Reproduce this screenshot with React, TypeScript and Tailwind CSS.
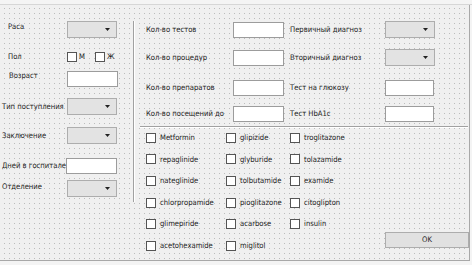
import React from 'react'

const dots =
  "bg-[radial-gradient(circle,#bcbcbc_0.6px,transparent_0.8px)] bg-[length:5px_5px] bg-[position:2px_1px]"

function Combo() {
  return (
    <div className="w-[50px] h-[17px] bg-[#e3e3e3] border border-[#adadad] flex items-center justify-end pr-[6px] shrink-0">
      <svg width="5" height="3" viewBox="0 0 5 3">
        <path d="M0 0h5L2.5 3z" fill="#222" />
      </svg>
    </div>
  )
}

function Field({ w = 51 }: { w?: number }) {
  return (
    <div
      className={
        'h-[16px] bg-white border border-[#9c9c9c] shrink-0 ' + (w === 51 ? 'w-[51px]' : 'w-[49px]')
      }
    />
  )
}

function Box() {
  return <div className="w-[10px] h-[10px] bg-white border border-[#555] shrink-0" />
}

function Check({ label }: { label: string }) {
  return (
    <div className="flex items-center gap-[4px] h-[21.6px] whitespace-nowrap">
      <Box />
      <span>{label}</span>
    </div>
  )
}

const drugs = [
  ['Metformin', 'glipizide', 'troglitazone'],
  ['repaglinide', 'glyburide', 'tolazamide'],
  ['nateglinide', 'tolbutamide', 'examide'],
  ['chlorpropamide', 'pioglitazone', 'citoglipton'],
  ['glimepiride', 'acarbose', 'insulin'],
  ['acetohexamide', 'miglitol', ''],
]

export default function App() {
  return (
    <div className="w-[472px] h-[265px] bg-[#f4f4f4] font-['DejaVu_Sans_Condensed','Liberation_Sans',sans-serif] text-[7.6px] leading-none text-[#222] overflow-hidden">
      <div className="h-[5px] border-b border-[#d6d6d6]" />
      <div className={'w-[470px] h-[256px] border-r border-b border-[#a8a8a8] bg-[#f0f0f0] flex ' + dots}>
        {/* left column */}
        <div className="w-[133px] flex flex-col">
          <div className="flex items-center h-[17px] mt-[16px]">
            <span className="w-[67px] pl-[8px] -mt-[5px]">Раса</span>
            <Combo />
          </div>
          <div className="flex items-center h-[17px] mt-[10px]">
            <span className="w-[67px] pl-[8px]">Пол</span>
            <Box />
            <span className="ml-[2px] w-[16px]">М</span>
            <Box />
            <span className="ml-[2px]">Ж</span>
          </div>
          <div className="flex items-center h-[17px] mt-[5px]">
            <span className="w-[67px] pl-[9px] -mt-[6px]">Возраст</span>
            <Field />
          </div>
          <div className="flex items-center h-[17px] mt-[11px]">
            <span className="w-[67px] pl-[2px] whitespace-nowrap">Тип поступления</span>
            <Combo />
          </div>
          <div className="flex items-center h-[17px] mt-[12px]">
            <span className="w-[67px] pl-[2px]">Заключение</span>
            <Combo />
          </div>
          <div className="flex items-center h-[17px] mt-[13px]">
            <span className="w-[66px] pl-[2px] whitespace-nowrap">Дней в госпитале</span>
            <Field />
          </div>
          <div className="flex items-center h-[17px] mt-[6px]">
            <span className="w-[67px] pl-[2px] -mt-[3px]">Отделение</span>
            <Combo />
          </div>
        </div>

        {/* separator */}
        <div className="w-[2px] h-[181px] mt-[16px] border-l border-[#a0a0a0] border-r border-r-white" />

        {/* right area */}
        <div className="flex-1 flex flex-col">
          <div className="pl-[11px] flex flex-col">
            {[
              ['Кол-во тестов', 'Первичный диагноз', 'combo', 16],
              ['Кол-во процедур', 'Вторичный диагноз', 'combo', 12],
              ['Кол-во препаратов', 'Тест на глюкозу', 'field', 13],
              ['Кол-во посещений до', 'Тест HbA1c', 'field', 9],
            ].map(([a, b, kind, mt]) => (
              <div
                key={a as string}
                className={
                  'flex items-center h-[17px] ' +
                  (mt === 16 ? 'mt-[16px]' : mt === 12 ? 'mt-[11px]' : mt === 13 ? 'mt-[13px]' : 'mt-[9px]')
                }
              >
                <span className="w-[87px] whitespace-nowrap">{a}</span>
                <Field />
                <span className="ml-[6px] w-[95px] whitespace-nowrap">{b}</span>
                {kind === 'combo' ? <Combo /> : <Field w={49} />}
              </div>
            ))}
          </div>

          <div className="ml-[5px] mr-[1px] mt-[4px] h-[2px] border-t border-[#a0a0a0] border-b border-b-white" />

          <div className="flex pl-[11px] -mt-[1px]">
            <div className="grid grid-cols-[80px_64px_95px]">
              {drugs.map((row, i) => (
                <React.Fragment key={i}>
                  {row.map((d, j) => (d ? <Check key={j} label={d} /> : <div key={j} />))}
                </React.Fragment>
              ))}
            </div>
            <div className="flex flex-col justify-end pb-[9px]">
              <div className="w-[84px] h-[16px] bg-[#e1e1e1] border border-[#adadad] flex items-center justify-center">
                OK
              </div>
            </div>
          </div>
        </div>
      </div>
    </div>
  )
}
